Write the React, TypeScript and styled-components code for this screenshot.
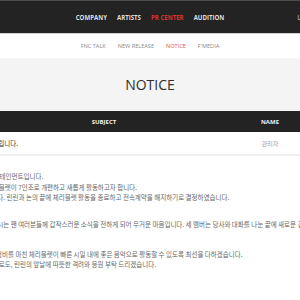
import React from "react";
import styled, { createGlobalStyle } from "styled-components";

const Global = createGlobalStyle`
  html, body { margin: 0; padding: 0; background: #fff; }
  body { width: 300px; height: 300px; overflow: hidden; font-family: "Open Sans", "Noto Sans CJK KR", sans-serif; }
`;

const Page = styled.div`
  width: 300px;
  height: 300px;
  overflow: hidden;
  display: flex;
  flex-direction: column;
`;

const TopBar = styled.header`
  height: 32px;
  background: #232323;
  border-top: 1px solid #4c4c4c;
  border-bottom: 1px solid #cfcfcf;
  display: grid;
  grid-template-columns: minmax(0, 1fr) auto minmax(0, 1fr);
  align-items: center;
`;

const MainNav = styled.nav`
  grid-column: 2;
  display: flex;
  gap: 10px;
`;

const MainItem = styled.span<{ $active?: boolean }>`
  font-family: "Open Sans", sans-serif;
  font-weight: 700;
  font-size: 6.1px;
  color: ${(p) => (p.$active ? "#d8322b" : "#dedede")};
  white-space: nowrap;
`;

const Util = styled.span`
  grid-column: 3;
  padding-left: 73px;
  font-family: "Open Sans", sans-serif;
  font-weight: 700;
  font-size: 6.1px;
  color: #9a9a9a;
  white-space: nowrap;
`;

const SubNav = styled.nav`
  height: 24px;
  display: flex;
  justify-content: center;
  align-items: center;
  gap: 12px;
  background: #fff;
`;

const SubItem = styled.span<{ $active?: boolean }>`
  font-family: "Open Sans", sans-serif;
  font-size: 5.6px;
  color: ${(p) => (p.$active ? "#e5534b" : "#8a8a8a")};
  white-space: nowrap;
`;

const TitleBand = styled.div`
  height: 53px;
  background: #f4f4f4;
  display: flex;
  justify-content: center;
  align-items: center;
`;

const Title = styled.h1`
  margin: 0;
  font-family: "Open Sans", sans-serif;
  font-weight: 400;
  font-size: 14px;
  color: #2e2e2e;
`;

const Content = styled.div`
  margin-left: -70px;
  width: 560px;
`;

const Grid = styled.div`
  display: grid;
  grid-template-columns: 36px 276px 56px 90px 60px;
  align-items: center;
`;

const HeadRow = styled(Grid)`
  height: 21px;
  background: #232323;
`;

const HeadCell = styled.span`
  text-align: center;
  font-family: "Open Sans", sans-serif;
  font-weight: 700;
  font-size: 6px;
  color: #f0f0f0;
`;

const PostRow = styled(Grid)`
  height: 22px;
  border-bottom: 2px solid #efefef;
`;

const PostTitle = styled.span`
  grid-column: span 2;
  padding-left: 10px;
  font-family: "Noto Sans CJK KR", sans-serif;
  font-size: 6.5px;
  color: #333;
  white-space: nowrap;
`;

const PostCell = styled.span`
  text-align: center;
  font-family: "Noto Sans CJK KR", sans-serif;
  font-size: 6px;
  color: #999;
  white-space: nowrap;
`;

const Body = styled.div`
  padding: 16px 0 0 12px;
`;

const Line = styled.p<{ $gap?: number }>`
  margin: ${(p) => p.$gap ?? 0}px 0 0;
  font-family: "Noto Sans CJK KR", sans-serif;
  font-size: 6.5px;
  line-height: 9.5px;
  color: #666;
  white-space: nowrap;
`;

export default function App() {
  return (
    <>
      <Global />
      <Page>
        <TopBar>
          <MainNav>
            <MainItem>COMPANY</MainItem>
            <MainItem>ARTISTS</MainItem>
            <MainItem $active>PR CENTER</MainItem>
            <MainItem>AUDITION</MainItem>
          </MainNav>
          <Util>LOGIN</Util>
        </TopBar>
        <SubNav>
          <SubItem>FNC TALK</SubItem>
          <SubItem>NEW RELEASE</SubItem>
          <SubItem $active>NOTICE</SubItem>
          <SubItem>F'MEDIA</SubItem>
        </SubNav>
        <TitleBand>
          <Title>NOTICE</Title>
        </TitleBand>
        <Content>
          <HeadRow>
            <HeadCell>NO</HeadCell>
            <HeadCell>SUBJECT</HeadCell>
            <HeadCell>NAME</HeadCell>
            <HeadCell>DATE</HeadCell>
            <HeadCell>HIT</HeadCell>
          </HeadRow>
          <PostRow>
            <PostTitle>체리블렛 관련 안내 드립니다.</PostTitle>
            <PostCell>관리자</PostCell>
            <PostCell>2023.04.20</PostCell>
            <PostCell>1520</PostCell>
          </PostRow>
          <Body>
            <Line>안녕하세요, FNC엔터테인먼트입니다.</Line>
            <Line $gap={1.5}>재정비를 거쳐서 체리블렛이 7인조로 개편하고 새롭게 활동하고자 합니다.</Line>
            <Line>충분히 상의하였습니다. 린린과 논의 끝에 체리블렛 활동을 종료하고 전속계약을 해지하기로 결정하였습니다.</Line>
            <Line $gap={18}>체리블렛을 사랑해주시는 팬 여러분들께 갑작스러운 소식을 전하게 되어 무거운 마음입니다. 세 멤버는 당사와 대화를 나눈 끝에 새로운 길을 걷기로 하였습니다.</Line>
            <Line $gap={20.5}>앞으로 당사는, 팀 재정비를 마친 체리블렛이 빠른 시일 내에 좋은 음악으로 활동할 수 있도록 최선을 다하겠습니다.</Line>
            <Line>또한 여러분께서 앞으로도, 린린의 앞날에 따뜻한 격려와 응원 부탁 드리겠습니다.</Line>
          </Body>
        </Content>
      </Page>
    </>
  );
}
